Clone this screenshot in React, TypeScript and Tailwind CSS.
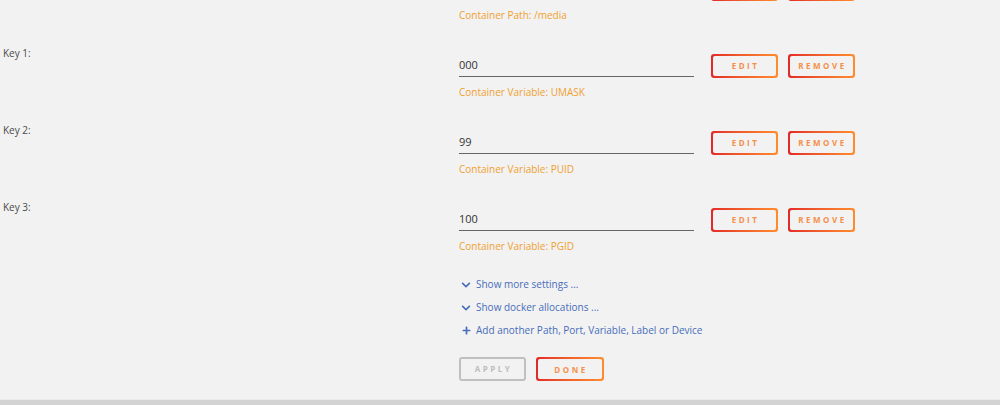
import React from "react";
import { FaChevronDown, FaPlus } from "react-icons/fa";

const font = { fontFamily: '"Open Sans", Lato, sans-serif' };

function GradBtn({ label, w = "w-[67px]" }: { label: string; w?: string }) {
  return (
    <div className={`${w} h-[24px] rounded-[3px] bg-gradient-to-r from-[#e22828] to-[#ff8c2f] p-[2px]`}>
      <div className="w-full h-full rounded-[2px] bg-[#f2f2f2] flex items-center justify-center">
        <span className="text-[8px] font-bold tracking-[2.5px] text-[#f5904a] pl-[2px]">{label}</span>
      </div>
    </div>
  );
}

function Row({ label, value, caption }: { label: string; value: string; caption: string }) {
  return (
    <div className="flex h-[77px]">
      <div className="w-[459px] pl-[3px] text-[10px] leading-[16px] text-[#4a4a4a]">{label}</div>
      <div className="flex flex-col">
        <div className="flex items-start pt-[9px]">
          <div className="w-[235px] h-[23px] border-b border-[#666] text-[11px] leading-[16px] text-[#333] pt-[3px]">
            {value}
          </div>
          <div className="ml-[17px] flex gap-[10px]">
            <GradBtn label={value ? "EDIT" : ""} />
            <GradBtn label={value ? "REMOVE" : ""} />
          </div>
        </div>
        <div className="mt-[6px] text-[10px] leading-[16px] text-[#f0a030]">{caption}</div>
      </div>
    </div>
  );
}

export default function App() {
  return (
    <div className="w-[1000px] h-[405px] bg-[#f2f2f2] flex flex-col overflow-hidden" style={font}>
      <div className="flex-1 overflow-hidden">
        <div className="-mt-[32px]">
          <Row label="" value="" caption="Container Path: /media" />
          <Row label="Key 1:" value="000" caption="Container Variable: UMASK" />
          <Row label="Key 2:" value="99" caption="Container Variable: PUID" />
          <Row label="Key 3:" value="100" caption="Container Variable: PGID" />
          <div className="-mt-[3px] pl-[459px] flex flex-col text-[10px] leading-[23px] text-[#486dba]">
            <div className="flex items-center gap-[5px] pl-[2px]">
              <FaChevronDown className="w-[10px] h-[10px]" />
              <span>Show more settings ...</span>
            </div>
            <div className="flex items-center gap-[5px] pl-[2px]">
              <FaChevronDown className="w-[10px] h-[10px]" />
              <span>Show docker allocations ...</span>
            </div>
            <div className="flex items-center gap-[5px] pl-[3px]">
              <FaPlus className="w-[9px] h-[9px]" />
              <span>Add another Path, Port, Variable, Label or Device</span>
            </div>
            <div className="flex gap-[10px] mt-[15px]">
              <div className="w-[67px] h-[24px] rounded-[3px] border-2 border-[#c0c0c0] flex items-center justify-center">
                <span className="text-[8px] font-bold tracking-[2.5px] text-[#bdbdbd] pl-[2px] leading-none">APPLY</span>
              </div>
              <GradBtn label="DONE" w="w-[68px]" />
            </div>
          </div>
        </div>
      </div>
      <div className="h-[1px] bg-[#ebebeb]" />
      <div className="h-[5px] bg-[#d3d3d3]" />
    </div>
  );
}
